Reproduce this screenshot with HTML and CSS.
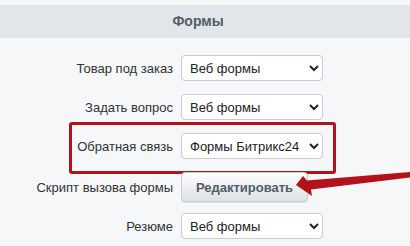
FILE: index.html
```html
<!DOCTYPE html>
<html>
<head>
    <title>Формы</title>
    <link rel="stylesheet" href="styles.css">
</head>
<body>
    <div class="zagolovok">Формы</div>
    <div class="forma">
        <div class="riga">
            <label class="etichetta">Товар под заказ</label>
            <select class="scelta"><option>Веб формы</option></select>
        </div>
        <div class="riga">
            <label class="etichetta">Задать вопрос</label>
            <select class="scelta"><option>Веб формы</option></select>
        </div>
        <div class="riga evidenziata">
            <label class="etichetta">Обратная связь</label>
            <select class="scelta"><option>Формы Битрикс24</option></select>
        </div>
        <div class="riga riga-bottone">
            <label class="etichetta">Скрипт вызова формы</label>
            <input type="button" class="bottone" value="Редактировать">
            <svg class="freccia" width="120" height="30" viewBox="0 0 120 30">
                <polygon points="6,13 13,4 17,8.5 120,0 120,5.5 21,17.5 22,24" fill="#b3121a"/>
            </svg>
        </div>
        <div class="riga">
            <label class="etichetta">Резюме</label>
            <select class="scelta"><option>Веб формы</option></select>
        </div>
    </div>
</body>
</html>
```

FILE: styles.css
```css
* {
    box-sizing: border-box;
}
body {
    margin: 0;
    background-color: #f5f7f8;
    font-family: "Liberation Sans", Arial, sans-serif;
    font-size: 13px;
    color: #333;
}
.zagolovok {
    margin-top: 5px;
    height: 33px;
    line-height: 33px;
    padding-right: 14px;
    background-color: #e0e6e9;
    color: #535c69;
    font-weight: bold;
    font-size: 14px;
    text-align: center;
}
.forma {
    display: flex;
    flex-direction: column;
    gap: 13px;
    padding-top: 17px;
}
.riga {
    position: relative;
    display: flex;
    align-items: center;
    gap: 8px;
}
.etichetta {
    width: 173px;
    text-align: right;
}
.scelta {
    width: 142px;
    height: 26px;
    padding: 0 4px;
    border: 1px solid #c6cdd3;
    border-radius: 4px;
    background-color: #fff;
    font-family: inherit;
    font-size: 13px;
    color: #222;
}
.evidenziata::before {
    content: "";
    position: absolute;
    left: 69px;
    top: -11px;
    width: 261px;
    height: 46px;
    border: 3px solid #b3121a;
    border-radius: 3px;
}
.riga-bottone {
    margin-bottom: -2px;
}
.bottone {
    width: 127px;
    height: 30px;
    border: 1px solid #c6cdd3;
    border-radius: 4px;
    background-image: linear-gradient(to bottom, #fdfdfd, #dde2e5);
    box-shadow: 0 1px 1px rgba(0, 0, 0, 0.1);
    font-family: inherit;
    font-size: 13px;
    font-weight: bold;
    color: #535c69;
}
.freccia {
    position: absolute;
    left: 290px;
    top: 0;
}
```
